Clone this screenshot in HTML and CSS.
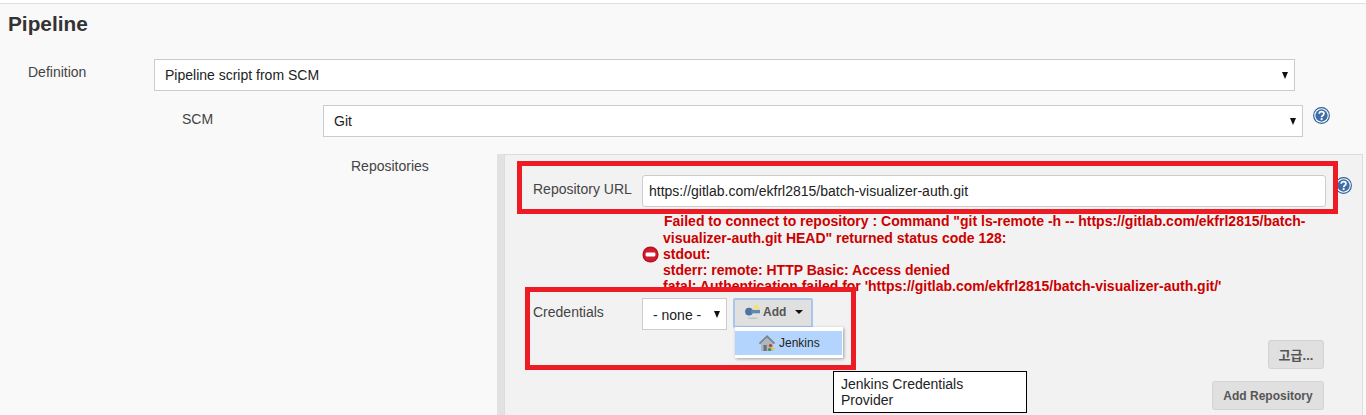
FILE: index.html
```html
<!DOCTYPE html>
<html lang="ko">
<head>
<meta charset="utf-8">
<title>Pipeline</title>
<link rel="stylesheet" href="styles.css">
</head>
<body>
<main class="page">
  <h1 class="title">Pipeline</h1>
  <div class="row row-def">
    <label class="label label-def">Definition</label>
    <div class="select select-def"><span>Pipeline script from SCM</span><i class="arrow"></i></div>
  </div>
  <div class="row row-scm">
    <label class="label label-scm">SCM</label>
    <div class="select select-scm"><span>Git</span><i class="arrow"></i></div>
    <svg class="help help-scm" viewBox="0 0 16 16"><use href="#q"/></svg>
  </div>
  <div class="row row-repos">
    <label class="label label-repos">Repositories</label>
    <div class="bar"></div>
    <section class="panel">
      <div class="url-row">
        <label class="label label-url">Repository URL</label>
        <div class="input">https://gitlab.com/ekfrl2815/batch-visualizer-auth.git</div>
        <svg class="help help-url" viewBox="0 0 16 16"><use href="#q"/></svg>
      </div>
      <div class="error">
        <svg class="error-icon" viewBox="0 0 16 16"><circle cx="8" cy="8" r="7.6" fill="#b9101f"/><circle cx="8" cy="8" r="6.2" fill="#d01c2c"/><rect x="3.4" y="6.2" width="9.2" height="3.6" rx="1" fill="#fff"/></svg>
        <div class="error-text"><span class="first">Failed to connect to repository : Command "git ls-remote -h -- https://gitlab.com/ekfrl2815/batch-</span><br>visualizer-auth.git HEAD" returned status code 128:<br>stdout:<br>stderr: remote: HTTP Basic: Access denied<br>fatal: Authentication failed for 'https://gitlab.com/ekfrl2815/batch-visualizer-auth.git/'</div>
      </div>
      <div class="cred-row">
        <label class="label label-cred">Credentials</label>
        <div class="select select-cred"><span>- none -</span><i class="arrow"></i></div>
        <button class="add" type="button">
          <svg class="key" viewBox="0 0 15 14"><ellipse cx="8" cy="13.2" rx="5.5" ry=".8" fill="#c2c2c2"/><circle cx="4" cy="6.6" r="3.9" fill="#4a74a4"/><rect x="6" y="4.9" width="9" height="3.4" fill="#6288b4"/><circle cx="11.5" cy="2.6" r="2.5" fill="#f4e36a"/></svg>
          <span>Add</span><i class="caret"></i>
        </button>
      </div>
      <div class="btn-line btn-adv"><button class="btn" type="button">고급...</button></div>
      <div class="btn-line btn-repo"><button class="btn" type="button">Add Repository</button></div>
    </section>
  </div>
</main>

<div class="menu">
  <div class="menu-item">
    <svg class="house" viewBox="0 0 18 18"><path d="M9 1 .8 9l1.4 1.2L9 4l6.8 6.2L17.2 9z" fill="#7d848c"/><path d="M3 9.8 9 4.4l6 5.4V17H3z" fill="#aeb5bc"/><rect x="5.5" y="11" width="3.2" height="6" fill="#6a7179"/><circle cx="12.5" cy="11.5" r="1.6" fill="#c0392b"/><circle cx="15" cy="14.5" r="1.5" fill="#e8c93a"/><circle cx="11.5" cy="15.5" r="1.6" fill="#3c8f3c"/></svg>
    <span>Jenkins</span>
  </div>
</div>
<div class="tooltip">Jenkins Credentials Provider</div>
<div class="mark mark-url"></div>
<div class="mark mark-cred"></div>

<svg class="defs" width="0" height="0">
  <symbol id="q" viewBox="0 0 16 16">
    <circle cx="8" cy="8" r="7.4" fill="#fff" stroke="#2f6098" stroke-width="1.1"/>
    <circle cx="8" cy="8" r="5.8" fill="#3c6ea8"/>
    <path d="M5.8 6.4C5.9 5 6.9 4.4 8 4.4c1.3 0 2.3.8 2.3 1.9 0 1.7-2.2 1.7-2.2 3.3" fill="none" stroke="#fff" stroke-width="1.6"/>
    <rect x="7.2" y="10.5" width="1.8" height="1.8" fill="#fff"/>
  </symbol>
</svg>
</body>
</html>
```
FILE: styles.css
```css
* { box-sizing: border-box; }
html, body { margin: 0; height: 415px; overflow: hidden; }
body {
  position: relative;
  background: #fff;
  font-family: "Liberation Sans", Arial, sans-serif;
  font-size: 14px;
  color: #333;
}
.page {
  margin-top: 3px;
  height: 412px;
  border-top: 1px solid #e0e0e0;
  background: #f9f9f9;
  overflow: hidden;
}
.title {
  margin: 0;
  padding: 8px 0 0 8px;
  font-size: 20.8px;
  line-height: 23px;
  font-weight: 700;
  color: #333;
}
.row { display: flex; align-items: flex-start; }
.label { line-height: 16px; color: #444; white-space: nowrap; }
.row-def { margin-top: 24px; padding-left: 28px; }
.label-def { width: 126px; margin-top: 5px; }
.row-scm { margin-top: 14px; padding-left: 182px; }
.label-scm { width: 141px; margin-top: 6px; }
.row-repos { margin-top: 17px; padding-left: 351px; }
.label-repos { width: 146px; margin-top: 4px; }

.select {
  display: flex;
  align-items: center;
  justify-content: space-between;
  background: #fff;
  border: 1px solid #ccc;
  color: #222;
  padding: 0 6px 0 10px;
}
.select-def { width: 1141px; height: 32px; }
.select-scm { width: 980px; height: 32px; }
.select-cred { width: 85px; height: 32px; font-size: 14px; margin-left: 51px; padding: 1px 6px 0 10px; }
.arrow {
  width: 0; height: 0;
  border-left: 3.5px solid transparent;
  border-right: 3.5px solid transparent;
  border-top: 7px solid #111;
}
.help { width: 17px; height: 17px; flex: none; }
.help-scm { margin: 2px 0 0 10px; }
.help-url { margin-left: 9px; margin-top: 2px; }

.bar { width: 7px; height: 270px; flex: none; background: #e2e2e2; }
.panel {
  width: 859px;
  height: 270px;
  flex: none;
  background: #f2f2f2;
  border: 1px solid #ddd;
  border-bottom: 0;
}
.url-row { display: flex; align-items: flex-start; padding: 20px 0 0 28px; }
.label-url { width: 109px; margin-top: 6px; color: #444; }
.input {
  width: 684px;
  height: 32px;
  flex: none;
  padding: 0 6px;
  line-height: 30px;
  background: #fff;
  border: 1px solid #ccc;
  border-radius: 3px;
  color: #222;
}
.error { display: flex; align-items: center; padding-left: 137px; height: 81px; margin-top: 6px; }
.error-icon { width: 17px; height: 17px; flex: none; margin-top: 1px; }
.error-text {
  margin-left: 4px;
  font-size: 14px;
  line-height: 16px;
  font-weight: 700;
  color: #cc0000;
  white-space: nowrap;
}
.first { margin-left: 1px; vertical-align: 1px; }
.cred-row { display: flex; align-items: flex-start; margin-top: 4px; padding-left: 28px; }
.label-cred { width: 58px; margin-top: 6px; }
.add {
  display: flex;
  align-items: center;
  width: 80px;
  height: 30px;
  margin-left: 6px;
  padding: 0 0 2px 10px;
  background: #e0e0e0;
  border: 2px solid #a9c5ea;
  border-radius: 2px;
  font: 700 12px "Liberation Sans", Arial, sans-serif;
  color: #555;
}
.key { width: 15px; height: 14px; margin-right: 3px; }
.caret {
  width: 0; height: 0;
  margin-left: 9px;
  border-left: 4px solid transparent;
  border-right: 4px solid transparent;
  border-top: 4px solid #111;
}
.btn-line { display: flex; justify-content: flex-end; padding-right: 38px; }
.btn-adv { margin-top: 10px; }
.btn-adv .btn { width: 56px; padding: 0; font-size: 13px; }
.btn-repo { margin-top: 12px; }
.btn {
  height: 29px;
  width: 112px;
  padding: 0;
  background: #e0e0e0;
  border: 1px solid #d3d3d3;
  border-radius: 3px;
  font: 700 12px "Liberation Sans", "Noto Sans CJK KR", sans-serif;
  color: #555;
}
.menu {
  position: absolute;
  left: 735px;
  top: 327px;
  width: 108px;
  height: 31px;
  padding: 4px 1px 3px 0;
  background: #fff;
  box-shadow: 1px 1px 3px rgba(0, 0, 0, .35);
}
.menu-item {
  display: flex;
  align-items: center;
  height: 24px;
  padding-left: 23px;
  background: #b3d4fc;
  font-size: 12px;
  color: #222;
}
.house { width: 18px; height: 18px; margin-right: 3px; }
.tooltip {
  position: absolute;
  left: 833px;
  top: 371px;
  width: 194px;
  height: 42px;
  padding: 4px 30px 0 7px;
  background: #fff;
  border: 1px solid #000;
  font-size: 14px;
  line-height: 16px;
  color: #222;
}
.mark { position: absolute; border: 5px solid #ed1c24; }
.mark-url { left: 517px; top: 161px; width: 821px; height: 53px; }
.mark-cred { left: 525px; top: 287px; width: 331px; height: 83px; }
.defs { position: absolute; }
```
